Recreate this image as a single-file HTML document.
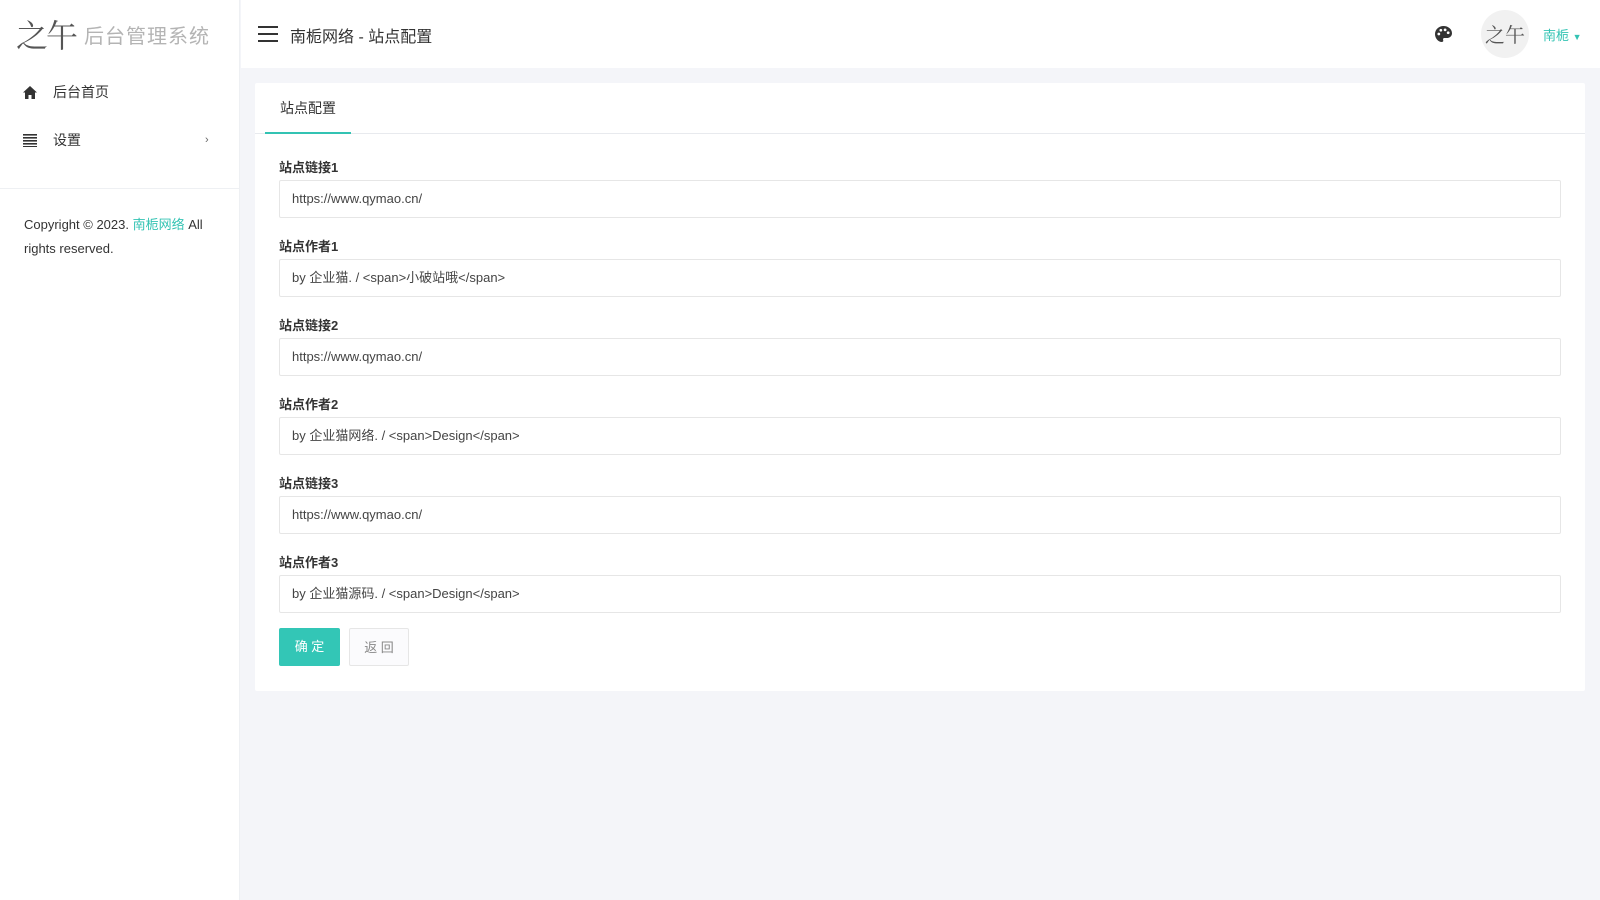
<!DOCTYPE html>
<html><head><meta charset="utf-8"><style>
*{box-sizing:border-box;margin:0;padding:0}
body{width:1600px;height:900px;overflow:hidden;background:#f4f5f9;font-family:"Liberation Sans","Noto Sans CJK SC",sans-serif;color:#333;position:relative}
.side{position:absolute;left:0;top:0;width:240px;height:900px;background:#fff;border-right:1px solid #eef0f3}
.logo{position:absolute;left:16px;top:10px;height:48px;display:flex;align-items:center}
.logo .m{font-family:"Noto Serif CJK SC",serif;font-size:32px;color:#555;letter-spacing:-2px}
.logo .t{font-size:20px;color:#b4b4b4;margin-left:8px;letter-spacing:1px}
.menu{position:absolute;left:0;top:68px;width:240px}
.mi{height:48px;display:flex;align-items:center;padding-left:23px;font-size:14px;color:#333}
.mi .ic{width:14px;margin-right:16px;display:flex}
.div{position:absolute;top:188px;left:0;width:240px;border-top:1px solid #eef0f3}
.copy{position:absolute;left:24px;top:213px;font-size:13px;line-height:24px;color:#333;width:200px}
.copy a{color:#33c3b3;text-decoration:none}
.hdr{position:absolute;left:241px;top:0;right:0;height:68px;background:#fff}
.ham{position:absolute;left:17px;top:26px}
.ttl{position:absolute;left:49px;top:23px;font-size:16px;color:#333}
.av{position:absolute;left:1481px;top:10px;width:48px;height:48px;border-radius:50%;background:#f1f1f1;font-family:"Noto Serif CJK SC",serif;font-size:20px;color:#555;line-height:48px;text-align:center}
.user{position:absolute;left:1543px;top:25px;font-size:13px;color:#33c3b3}
.card{position:absolute;left:255px;top:83px;width:1330px;height:608px;background:#fff;border-radius:2px}
.tabs{height:51px;border-bottom:1px solid #e8eaee;position:relative}
.tab{position:absolute;left:10px;top:0;width:86px;height:51px;text-align:center;line-height:50px;font-size:14px;color:#333;border-bottom:2px solid #33c3b3}
.f{position:absolute;left:24px;width:1282px}
.f label{display:block;font-size:13px;font-weight:bold;color:#333;height:24px;padding-top:1px}
.f .in{height:38px;border:1px solid #e6e6e6;border-radius:2px;padding-left:12px;line-height:36px;font-size:13px;color:#444}
.btn{position:absolute;top:545px;height:38px;line-height:38px;font-size:13px;text-align:center;border-radius:2px}
</style></head><body>
<div class="side">
 <div class="logo"><span class="m">之午</span><span class="t">后台管理系统</span></div>
 <div class="menu">
  <div class="mi"><span class="ic"><svg width="14" height="13" viewBox="0 0 14 13"><path d="M7 0L0 6.5h2V13h3.5V9h3v4H12V6.5h2z" fill="#333"/></svg></span>后台首页</div>
  <div class="mi"><span class="ic"><svg width="14" height="14" viewBox="0 0 14 14" fill="#333"><rect y="1" width="14" height="1.6"/><rect y="4" width="14" height="1.6"/><rect y="7" width="14" height="1.6"/><rect y="10" width="14" height="1.6"/><rect y="13" width="14" height="1"/></svg></span>设置<span style="position:absolute;left:205px;font-size:11px;color:#666">›</span></div>
 </div>
 <div class="div"></div>
 <div class="copy">Copyright © 2023. <a>南栀网络</a> All rights reserved.</div>
</div>
<div class="hdr">
 <svg class="ham" width="20" height="16" viewBox="0 0 20 16" fill="#333"><rect width="20" height="2"/><rect y="7" width="20" height="2"/><rect y="14" width="20" height="2"/></svg>
 <div class="ttl">南栀网络 - 站点配置</div>
 <svg style="position:absolute;left:1194px;top:26px" width="17" height="17" viewBox="0 0 16 16"><path d="M8 0C3.6 0 0 3.4 0 7.6 0 11.5 3 15 6.5 15c1.2 0 1.5-.8 1.2-1.7-.3-.9-.1-2 1.2-2h2.3C14 11.3 16 9.4 16 6.8 16 3 12.4 0 8 0z" fill="#333"/><circle cx="3.6" cy="7.5" r="1.3" fill="#fff"/><circle cx="5.5" cy="4" r="1.3" fill="#fff"/><circle cx="9.5" cy="3.6" r="1.3" fill="#fff"/><circle cx="12.4" cy="6.3" r="1.3" fill="#fff"/></svg>
</div>
<div class="av">之午</div>
<div class="user">南栀 <span style="font-size:9px">▼</span></div>
<div class="card">
 <div class="tabs"><div class="tab">站点配置</div></div>
 <div class="f" style="top:73px"><label>站点链接1</label><div class="in">https://www.qymao.cn/</div></div>
 <div class="f" style="top:152px"><label>站点作者1</label><div class="in">by 企业猫. / &lt;span&gt;小破站哦&lt;/span&gt;</div></div>
 <div class="f" style="top:231px"><label>站点链接2</label><div class="in">https://www.qymao.cn/</div></div>
 <div class="f" style="top:310px"><label>站点作者2</label><div class="in">by 企业猫网络. / &lt;span&gt;Design&lt;/span&gt;</div></div>
 <div class="f" style="top:389px"><label>站点链接3</label><div class="in">https://www.qymao.cn/</div></div>
 <div class="f" style="top:468px"><label>站点作者3</label><div class="in">by 企业猫源码. / &lt;span&gt;Design&lt;/span&gt;</div></div>
 <div class="btn" style="left:24px;width:61px;background:#33c6b6;color:#fff">确 定</div>
 <div class="btn" style="left:94px;width:60px;border:1px solid #e6e6e6;background:#fbfbfd;color:#888">返 回</div>
</div>
</body></html>
